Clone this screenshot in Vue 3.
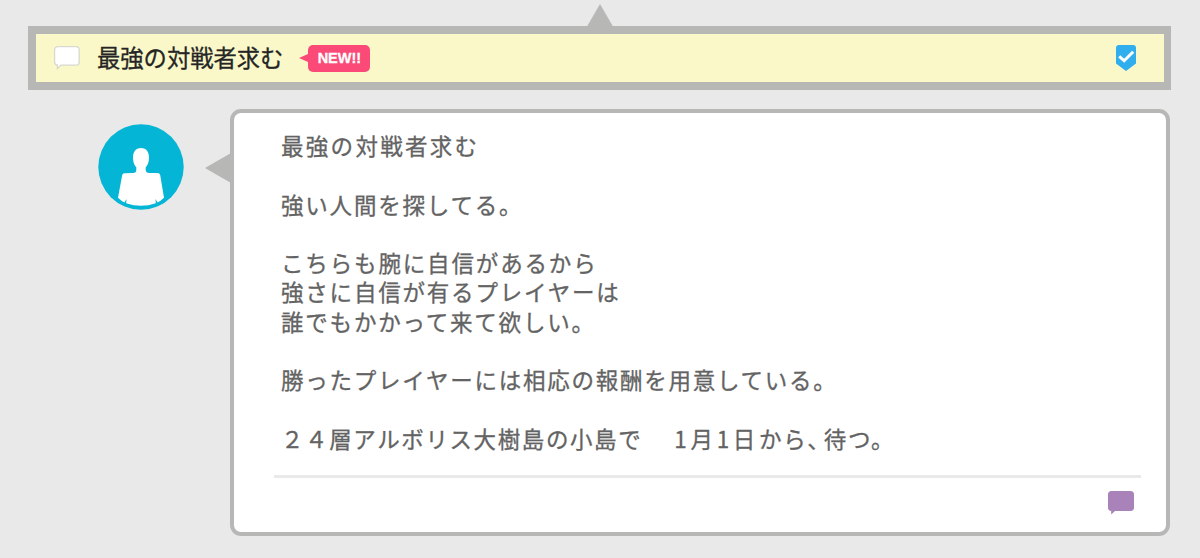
<template>
  <div class="board">
    <header class="topic">
      <svg class="topic-pointer" viewBox="0 0 26 23">
        <path d="M13 0 L26 22.5 V23 H0 V22.5 Z" fill="#b7b7b5" />
      </svg>
      <svg class="topic-icon" viewBox="0 0 28 26">
        <path
          d="M5 1.6 H23 Q26.2 1.6 26.2 4.8 V17 Q26.2 20.2 23 20.2 H7.8 L4.4 23.6 V20.2 Q1.6 20 1.6 17 V4.8 Q1.6 1.6 5 1.6 Z"
          fill="#fff"
          stroke="#d9d9cf"
          stroke-width="1.3"
        />
      </svg>
      <h1 class="topic-title">{{ title }}</h1>
      <span class="new-badge">NEW!!</span>
      <svg class="topic-check" viewBox="0 0 20 26">
        <path d="M3 0 H17 Q20 0 20 3 V18.5 L10 26 L0 18.5 V3 Q0 0 3 0 Z" fill="#31aeee" />
        <path d="M3.2 11.3 L8.2 15.8 L17.2 6.8" fill="none" stroke="#fff" stroke-width="3" />
      </svg>
    </header>

    <div class="post">
      <svg class="avatar" viewBox="0 0 86 86">
        <circle cx="43" cy="43" r="42.7" fill="#04b5d5" />
        <path
          d="M43 24 C48.5 24 51 28.2 51 33.5 C51 38.5 49.5 41.5 47.7 43.3 V46 C47.7 48 49 49 51.5 49 H59.5 Q61.8 49 62.2 51 L66 73.8 Q62.8 77 59.5 78.4 L57.5 75 L57.8 79.2 Q43 84.2 28.2 79.2 L28.5 75 L26.5 78.4 Q23.2 77 20 73.8 L24.2 51 Q24.6 49.3 26.5 49.2 L35 49 C37.3 49 38.3 48 38.3 46 V43.3 C36.5 41.5 35 38.5 35 33.5 C35 28.2 37.5 24 43 24 Z"
          fill="#fff"
        />
      </svg>

      <article class="message">
        <svg class="message-pointer" viewBox="0 0 26 30">
          <path d="M0 15 L26 0 V30 Z" fill="#b7b7b5" />
        </svg>
        <div class="message-body">
          <p
            v-for="(line, i) in lines"
            :key="i"
            class="line"
            :style="{ letterSpacing: line.spacing + 'px' }"
          >{{ line.text }}</p>
          <p class="line place">２４層アルボリス大樹島の小島で<span class="date">1月1日</span>から<span class="comma">、</span>待つ。</p>
        </div>
        <footer class="message-footer">
          <svg class="reply-icon" viewBox="0 0 26 24">
            <path
              d="M3.5 0 H22.5 Q26 0 26 3.5 V16.5 Q26 20 22.5 20 H7 L3.2 23.6 V20 Q0 19.8 0 16.5 V3.5 Q0 0 3.5 0 Z"
              fill="#a882b8"
            />
          </svg>
        </footer>
      </article>
    </div>
  </div>
</template>

<script setup>
const title = "最強の対戦者求む";

// Blank entries keep the paragraph spacing of the post
const lines = [
  { text: "最強の対戦者求む", spacing: 2.3 },
  { text: "", spacing: 0 },
  { text: "強い人間を探してる。", spacing: 1.8 },
  { text: "", spacing: 0 },
  { text: "こちらも腕に自信があるから", spacing: 1.85 },
  { text: "強さに自信が有るプレイヤーは", spacing: 1.8 },
  { text: "誰でもかかって来て欲しい。", spacing: 1.8 },
  { text: "", spacing: 0 },
  { text: "勝ったプレイヤーには相応の報酬を用意している。", spacing: 1.76 },
  { text: "", spacing: 0 },
];
</script>

<style>
body {
  background-color: #e9e9e9;
}
</style>

<style scoped>
.board {
  box-sizing: border-box;
  height: 558px;
  padding: 26px 29px 0 28px;
  background-color: #e9e9e9;
  font-family: "Noto Sans CJK JP", "Liberation Sans", sans-serif;
  overflow: hidden;
}

.topic {
  position: relative;
  display: flex;
  align-items: center;
  box-sizing: border-box;
  height: 64px;
  padding: 0 28px 0 16px;
  border: 8px solid #b7b7b5;
  border-right-width: 7px;
  background-color: #faf8c8;
}

.topic-pointer {
  position: absolute;
  top: -30px;
  left: 551px;
  width: 26px;
  height: 23px;
}

.topic-icon {
  width: 28px;
  height: 26px;
  margin-left: 1px;
}

.topic-title {
  margin: -3px 0 0 16px;
  font-size: 23.3px;
  font-weight: 400;
  line-height: 48px;
  color: #252525;
  white-space: nowrap;
  -webkit-text-stroke: 0.3px #252525;
}

.new-badge {
  position: relative;
  width: 62px;
  height: 27px;
  margin-left: 25px;
  border-radius: 5px;
  background-color: #fb4a78;
  color: #fff;
  font-family: "Liberation Sans", sans-serif;
  font-size: 14.5px;
  font-weight: 700;
  line-height: 27px;
  text-align: center;
  -webkit-text-stroke: 0.3px #fff;
}

.new-badge::before {
  content: "";
  position: absolute;
  top: 9px;
  left: -9px;
  border: solid transparent;
  border-width: 4.5px 9px 4.5px 0;
  border-right-color: #fb4a78;
}

.topic-check {
  width: 20px;
  height: 26px;
  margin-left: auto;
}

.post {
  display: flex;
  align-items: flex-start;
  padding: 19px 1px 0 70px;
}

.avatar {
  flex: none;
  width: 86px;
  height: 86px;
  margin-top: 15px;
}

.message {
  position: relative;
  flex: 1;
  box-sizing: border-box;
  height: 427px;
  margin-left: 46px;
  padding: 18px 25px 0 40px;
  border: 4px solid #b7b7b5;
  border-radius: 11px;
  background-color: #fff;
}

.message-pointer {
  position: absolute;
  top: 40px;
  left: -29px;
  width: 26px;
  height: 30px;
}

.message-body {
  height: 344px;
  padding-left: 7px;
  border-bottom: 3px solid #e9e9e9;
}

.line {
  height: 29.25px;
  margin: 0;
  font-size: 22.5px;
  line-height: 29.25px;
  color: #636363;
  white-space: nowrap;
  -webkit-text-stroke: 0.3px #636363;
}

.place {
  letter-spacing: 1.6px;
}

.date {
  margin-left: 32px;
  letter-spacing: 3.7px;
}

.comma {
  letter-spacing: -6px;
}

.message-footer {
  display: flex;
  justify-content: flex-end;
  padding: 13px 7px 0 0;
}

.reply-icon {
  width: 26px;
  height: 24px;
}
</style>
